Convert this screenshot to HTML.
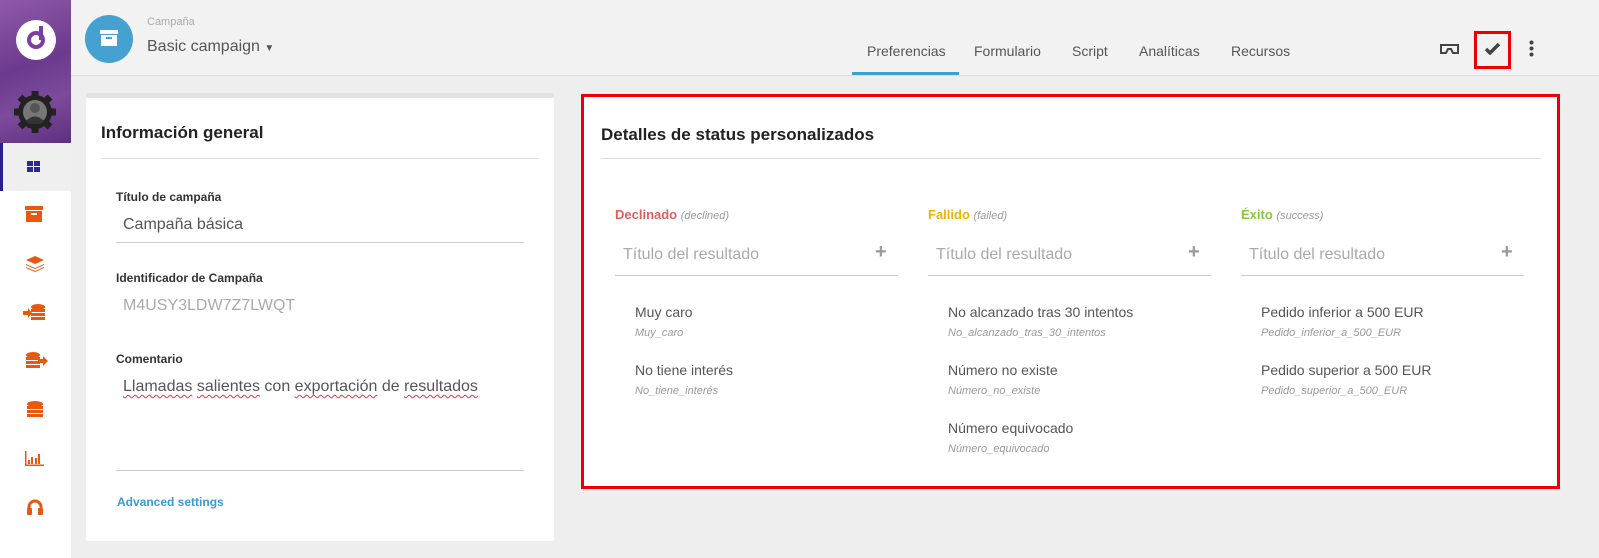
<!DOCTYPE html>
<html><head><meta charset="utf-8"><style>
*{margin:0;padding:0;box-sizing:border-box}
body{width:1599px;height:558px;overflow:hidden;background:#eeeeee;font-family:"Liberation Sans",sans-serif;position:relative;color:#333}
.a{position:absolute;white-space:nowrap}
.side{position:absolute;left:0;top:0;width:71px;height:558px;background:#fff}
.purple{position:absolute;left:0;top:0;width:71px;height:143px;background:linear-gradient(160deg,#8e5aa8 0%,#6c3a8e 45%,#7d4b9b 70%,#5e2f80 100%)}
.hdr{position:absolute;left:71px;top:0;width:1528px;height:76px;background:#f2f2f2;border-bottom:1px solid #ddd}
.tab{position:absolute;top:43px;font-size:14px;color:#555}
.card{position:absolute;background:#fff}
.lbl{font-size:12px;font-weight:bold;color:#333}
.ph{font-size:16px;color:#aaa}
.it{font-size:14px;color:#555}
.sub{font-size:11px;font-style:italic;color:#999}
.plus{font-size:20px;font-weight:bold;color:#999}
.line{position:absolute;height:1px;background:#ccc}
.sp{text-decoration:underline wavy #e33;text-decoration-thickness:1px;text-underline-offset:3px}
</style></head><body>
<div class="side">
 <div class="purple"></div>
 <div class="a" style="left:16px;top:20px;width:40px;height:40px;border-radius:50%;background:#fff"></div>
 <div class="a" style="left:27px;top:31px;width:18px;height:18px;border-radius:50%;border:4px solid #7b3fa0"></div>
 <div class="a" style="left:39px;top:26px;width:4px;height:14px;background:#7b3fa0"></div>
 <svg class="a" style="left:11px;top:88px" width="48" height="48" viewBox="0 0 48 48"><g fill="#222"><circle cx="24" cy="24" r="17"/><g stroke="#222" stroke-width="7"><line x1="24" y1="3" x2="24" y2="45"/><line x1="3" y1="24" x2="45" y2="24"/><line x1="9" y1="9" x2="39" y2="39"/><line x1="39" y1="9" x2="9" y2="39"/></g></g><circle cx="24" cy="24" r="12" fill="#777"/><circle cx="24" cy="20" r="5" fill="#555"/><path d="M15 33 Q24 24 33 33 L30 36 L18 36 Z" fill="#333"/></svg>
 <div class="a" style="left:0;top:143px;width:71px;height:48px;background:#efefef"></div>
 <div class="a" style="left:0;top:143px;width:3px;height:48px;background:#2a1f8f"></div>
 <svg class="a" style="left:27px;top:161px" width="14" height="12"><g fill="#2a2a96"><rect x="0" y="0" width="6" height="5"/><rect x="7" y="0" width="6" height="5"/><rect x="0" y="6" width="6" height="5"/><rect x="7" y="6" width="6" height="5"/></g></svg>
 <svg class="a" style="left:25px;top:206px" width="18" height="16"><g fill="#e8580e"><rect x="0" y="0" width="18" height="4"/><rect x="1" y="5" width="16" height="11"/></g><rect x="6" y="7" width="6" height="2" fill="#fff"/></svg>
 <svg class="a" style="left:26px;top:256px" width="18" height="16"><g fill="#e8580e"><path d="M9 0 L18 4 L9 8 L0 4Z"/><path d="M0 8 L9 12 L18 8 L18 9 L9 13 L0 9Z"/><path d="M0 11 L9 15 L18 11 L18 12 L9 16 L0 12Z"/></g></svg>
 <svg class="a" style="left:23px;top:304px" width="22" height="16"><g fill="#e8580e"><ellipse cx="15" cy="3" rx="7" ry="3"/><rect x="8" y="5" width="14" height="3"/><rect x="8" y="9" width="14" height="3"/><rect x="8" y="13" width="14" height="3"/><path d="M0 7 H5 V4 L9 9 L5 14 V11 H0Z"/></g></svg>
 <svg class="a" style="left:26px;top:352px" width="22" height="16"><g fill="#e8580e"><ellipse cx="7" cy="3" rx="7" ry="3"/><rect x="0" y="5" width="14" height="3"/><rect x="0" y="9" width="14" height="3"/><rect x="0" y="13" width="14" height="3"/><path d="M12 7 H17 V4 L22 9 L17 14 V11 H12Z"/></g></svg>
 <svg class="a" style="left:27px;top:401px" width="16" height="16"><g fill="#e8580e"><ellipse cx="8" cy="3" rx="8" ry="3"/><rect x="0" y="5" width="16" height="3"/><rect x="0" y="9" width="16" height="3"/><rect x="0" y="13" width="16" height="3"/></g></svg>
 <svg class="a" style="left:25px;top:451px" width="19" height="15"><g fill="#e8580e"><rect x="0" y="0" width="1.5" height="15"/><rect x="0" y="13.5" width="19" height="1.5"/><rect x="3" y="9" width="2" height="4"/><rect x="6" y="6" width="2" height="7"/><rect x="10" y="7" width="2" height="6"/><rect x="13" y="3" width="2" height="10"/></g></svg>
 <svg class="a" style="left:26px;top:498px" width="18" height="17"><path d="M3 12 V9 A6 6 0 0 1 15 9 V12" fill="none" stroke="#e8580e" stroke-width="3"/><rect x="1" y="10" width="5" height="7" rx="1" fill="#e8580e"/><rect x="12" y="10" width="5" height="7" rx="1" fill="#e8580e"/></svg>
</div>
<div class="hdr">
 <div class="a" style="left:14px;top:15px;width:48px;height:48px;border-radius:50%;background:#45a1d1"></div>
 <svg class="a" style="left:29px;top:30px" width="18" height="16"><g fill="#fff"><rect x="0" y="0" width="18" height="4"/><rect x="1" y="5" width="16" height="11"/></g><rect x="6" y="7" width="6" height="2" fill="#45a1d1"/></svg>
 <div class="a" style="left:76px;top:16px;font-size:11px;color:#aaa">Campaña</div>
 <div class="a" style="left:76px;top:38px;font-size:16px;color:#555">Basic campaign <span style="font-size:10px">▼</span></div>
 <div class="tab" style="left:796px">Preferencias</div>
 <div class="tab" style="left:903px">Formulario</div>
 <div class="tab" style="left:1001px">Script</div>
 <div class="tab" style="left:1068px">Analíticas</div>
 <div class="tab" style="left:1160px">Recursos</div>
 <div class="a" style="left:781px;top:72px;width:107px;height:3px;background:#3fa0d0"></div>
 <svg class="a" style="left:1369px;top:44px" width="19" height="10"><path d="M1 1 H18 V9 H13 L11 5 H8 L6 9 H1Z" fill="none" stroke="#444" stroke-width="2"/></svg>
 <div class="a" style="left:1403px;top:31px;width:37px;height:38px;border:3px solid #e00"></div>
 <svg class="a" style="left:1413px;top:42px" width="17" height="13"><path d="M2 7 L6 11 L15 2" fill="none" stroke="#444" stroke-width="3.5"/></svg>
 <svg class="a" style="left:1458px;top:40px" width="5" height="17"><g fill="#444"><circle cx="2.5" cy="2.5" r="2"/><circle cx="2.5" cy="8.5" r="2"/><circle cx="2.5" cy="14.5" r="2"/></g></svg>
</div>
<div class="card" style="left:86px;top:93px;width:468px;height:448px;border-top:5px solid #e2e2e2;border-radius:2px">
 <div class="a" style="left:15px;top:25px;font-size:17px;font-weight:bold;color:#222">Información general</div>
 <div class="line" style="left:15px;top:60px;width:438px;background:#ddd"></div>
 <div class="a lbl" style="left:30px;top:92px">Título de campaña</div>
 <div class="a" style="left:37px;top:118px;font-size:16px;color:#555">Campaña básica</div>
 <div class="line" style="left:30px;top:144px;width:408px"></div>
 <div class="a lbl" style="left:30px;top:173px">Identificador de Campaña</div>
 <div class="a" style="left:37px;top:199px;font-size:16px;color:#aaa">M4USY3LDW7Z7LWQT</div>
 <div class="a lbl" style="left:30px;top:254px">Comentario</div>
 <div class="a" style="left:37px;top:280px;font-size:16px;color:#555"><span class="sp">Llamadas</span> <span class="sp">salientes</span> con <span class="sp">exportación</span> de <span class="sp">resultados</span></div>
 <div class="line" style="left:30px;top:372px;width:408px"></div>
 <div class="a" style="left:31px;top:397px;font-size:12px;font-weight:bold;color:#3a9ad4">Advanced settings</div>
</div>
<div class="card" style="left:581px;top:94px;width:979px;height:395px;border:3px solid #e00">
 <div class="a" style="left:17px;top:28px;font-size:17px;font-weight:bold;color:#222">Detalles de status personalizados</div>
 <div class="line" style="left:17px;top:61px;width:940px;background:#ddd"></div>

 <div class="a" style="left:31px;top:110px;font-size:13px;font-weight:bold;color:#e35d5d">Declinado <span class="sub" style="font-weight:normal">(declined)</span></div>
 <div class="a ph" style="left:39px;top:149px">Título del resultado</div>
 <div class="a plus" style="left:291px;top:144px">+</div>
 <div class="line" style="left:31px;top:178px;width:283px"></div>
 <div class="a it" style="left:51px;top:207px">Muy caro</div>
 <div class="a sub" style="left:51px;top:230px">Muy_caro</div>
 <div class="a it" style="left:51px;top:265px">No tiene interés</div>
 <div class="a sub" style="left:51px;top:288px">No_tiene_interés</div>

 <div class="a" style="left:344px;top:110px;font-size:13px;font-weight:bold;color:#f0b400">Fallido <span class="sub" style="font-weight:normal">(failed)</span></div>
 <div class="a ph" style="left:352px;top:149px">Título del resultado</div>
 <div class="a plus" style="left:604px;top:144px">+</div>
 <div class="line" style="left:344px;top:178px;width:283px"></div>
 <div class="a it" style="left:364px;top:207px">No alcanzado tras 30 intentos</div>
 <div class="a sub" style="left:364px;top:230px">No_alcanzado_tras_30_intentos</div>
 <div class="a it" style="left:364px;top:265px">Número no existe</div>
 <div class="a sub" style="left:364px;top:288px">Número_no_existe</div>
 <div class="a it" style="left:364px;top:323px">Número equivocado</div>
 <div class="a sub" style="left:364px;top:346px">Número_equivocado</div>

 <div class="a" style="left:657px;top:110px;font-size:13px;font-weight:bold;color:#8cc63f">Éxito <span class="sub" style="font-weight:normal">(success)</span></div>
 <div class="a ph" style="left:665px;top:149px">Título del resultado</div>
 <div class="a plus" style="left:917px;top:144px">+</div>
 <div class="line" style="left:657px;top:178px;width:283px"></div>
 <div class="a it" style="left:677px;top:207px">Pedido inferior a 500 EUR</div>
 <div class="a sub" style="left:677px;top:230px">Pedido_inferior_a_500_EUR</div>
 <div class="a it" style="left:677px;top:265px">Pedido superior a 500 EUR</div>
 <div class="a sub" style="left:677px;top:288px">Pedido_superior_a_500_EUR</div>
</div>
</body></html>
